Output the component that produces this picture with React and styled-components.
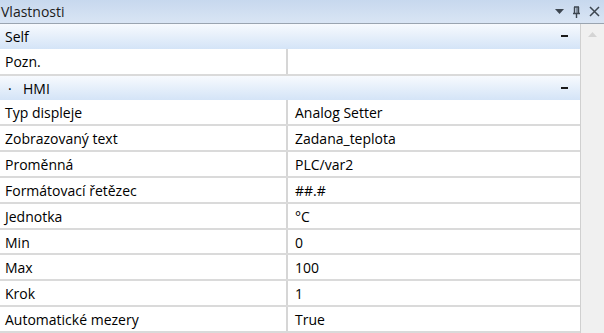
import React from 'react';
import styled, { createGlobalStyle } from 'styled-components';

const GlobalStyle = createGlobalStyle`
  html, body {
    margin: 0;
    padding: 0;
    background: #ffffff;
  }
  body {
    font-family: 'Open Sans', 'Noto Sans', sans-serif;
  }
`;

const Panel = styled.div`
  width: 604px;
  height: 333px;
  display: flex;
  flex-direction: column;
  overflow: hidden;
  background: #f0f0f0;
`;

const TitleBar = styled.div`
  height: 23px;
  display: flex;
  align-items: center;
  justify-content: space-between;
  padding: 0 4px 0 1px;
  background: linear-gradient(to bottom, #c7d8ee, #d9e5f4);
  border-bottom: 1px solid #9aa4b0;
  font-size: 14px;
  color: #1b1b1b;
`;

const TitleText = styled.span`
  line-height: 23px;
`;

const TitleIcons = styled.div`
  display: flex;
  align-items: center;
  gap: 8px;
  color: #3d4650;
`;

const Body = styled.div`
  flex: 1;
  display: flex;
  min-height: 0;
`;

const Grid = styled.div`
  width: 580px;
  display: flex;
  flex-direction: column;
  background: #ffffff;
  border-right: 1px solid #d0d0d0;
`;

const Scrollbar = styled.div`
  flex: 1;
  background: #f0f0f0;
  display: flex;
  justify-content: center;
  padding-top: 8px;
`;

const CategoryRow = styled.div`
  height: 25px;
  display: flex;
  align-items: center;
  justify-content: space-between;
  padding: 0 12px 0 5px;
  background: linear-gradient(to bottom, #f7fafe, #d4e4f7);
  font-size: 14px;
  color: #000;
`;

const CategoryLabel = styled.span`
  display: flex;
  align-items: center;
`;

const Bullet = styled.span`
  width: 18px;
  padding-left: 3px;
  box-sizing: border-box;
`;

const Collapse = styled.span`
  width: 7px;
  height: 2px;
  background: #1a1a1a;
`;

const PropRow = styled.div`
  height: ${(p) => p.$h || 24}px;
  display: flex;
  border-bottom: 2px solid #dadada;
  font-size: 14px;
  color: #000;
`;

const NameCell = styled.div`
  width: 288px;
  padding-left: 5px;
  box-sizing: border-box;
  display: flex;
  align-items: center;
  padding-top: 1px;
  border-right: 2px solid #d6d6d6;
`;

const ValueCell = styled.div`
  flex: 1;
  padding-left: 7px;
  padding-top: 1px;
  display: flex;
  align-items: center;
`;

const props = [
  ['Typ displeje', 'Analog Setter'],
  ['Zobrazovaný text', 'Zadana_teplota'],
  ['Proměnná', 'PLC/var2'],
  ['Formátovací řetězec', '##.#'],
  ['Jednotka', '°C'],
  ['Min', '0'],
  ['Max', '100'],
  ['Krok', '1'],
  ['Automatické mezery', 'True'],
];

function DropIcon() {
  return (
    <svg width="9" height="6" viewBox="0 0 9 6">
      <path d="M0 0 H9 L4.5 5 Z" fill="#3d4650" />
    </svg>
  );
}

function PinIcon() {
  return (
    <svg width="9" height="12" viewBox="0 0 9 12">
      <path d="M2 1 H7 M2.5 1 V7 M6.5 1 V7 M1 7.5 H8 M4.5 8 V12" stroke="#3d4650" strokeWidth="1.4" fill="none" />
      <path d="M5 1.5 V7" stroke="#3d4650" strokeWidth="1" />
    </svg>
  );
}

function CloseIcon() {
  return (
    <svg width="11" height="11" viewBox="0 0 11 11">
      <path d="M1 1 L10 10 M10 1 L1 10" stroke="#3d4650" strokeWidth="1.5" />
    </svg>
  );
}

function UpArrow() {
  return (
    <svg width="9" height="5" viewBox="0 0 9 5">
      <path d="M0 5 L4.5 0 L9 5 Z" fill="#d4d4d4" />
    </svg>
  );
}

export default function App() {
  return (
    <>
      <GlobalStyle />
      <Panel>
        <TitleBar>
          <TitleText>Vlastnosti</TitleText>
          <TitleIcons>
            <DropIcon />
            <PinIcon />
            <CloseIcon />
          </TitleIcons>
        </TitleBar>
        <Body>
          <Grid>
            <CategoryRow>
              <CategoryLabel>Self</CategoryLabel>
              <Collapse />
            </CategoryRow>
            <PropRow $h={25}>
              <NameCell>Pozn.</NameCell>
              <ValueCell></ValueCell>
            </PropRow>
            <CategoryRow>
              <CategoryLabel>
                <Bullet>·</Bullet>HMI
              </CategoryLabel>
              <Collapse />
            </CategoryRow>
            {props.map(([name, value]) => (
              <PropRow key={name}>
                <NameCell>{name}</NameCell>
                <ValueCell>{value}</ValueCell>
              </PropRow>
            ))}
          </Grid>
          <Scrollbar>
            <UpArrow />
          </Scrollbar>
        </Body>
      </Panel>
    </>
  );
}
